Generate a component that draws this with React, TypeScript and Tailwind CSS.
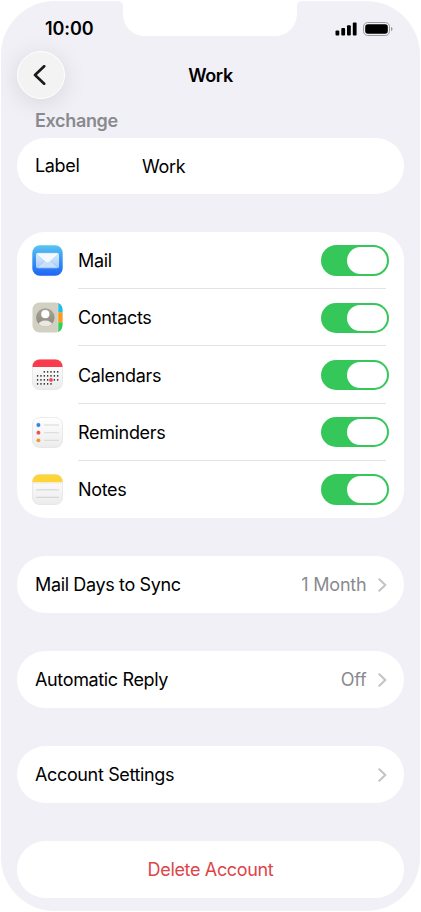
import { useState } from 'react'
import type { ReactNode } from 'react'

function MailIcon() {
  return (
    <svg viewBox="0 0 31 31" className="size-[31px]">
      <defs>
        <linearGradient id="mailBg" x1="0" y1="0" x2="0" y2="1">
          <stop offset="0" stopColor="#5ac4f3" />
          <stop offset="0.5" stopColor="#3592f4" />
          <stop offset="1" stopColor="#1f66f5" />
        </linearGradient>
        <linearGradient id="mailFold" x1="0" y1="0" x2="0" y2="1">
          <stop offset="0" stopColor="#d9edfd" />
          <stop offset="1" stopColor="#a5cbfa" />
        </linearGradient>
      </defs>
      <rect x="0.3" y="0.3" width="30.4" height="30.4" rx="7.5" fill="url(#mailBg)" />
      <rect x="4" y="8" width="23" height="15.2" rx="2" fill="url(#mailFold)" />
      <path d="M5 22.7l8-7.4h5l8 7.4z" fill="#c9e0fc" stroke="#8bb9f4" strokeWidth="0.5" />
      <path d="M4.3 8.8Q4.9 8 6 8h19q1.1 0 1.7.8l-9.5 8.4q-1.7 1.3-3.4 0z" fill="#f4faff" stroke="#a9cff5" strokeWidth="0.5" />
    </svg>
  )
}

function ContactsIcon() {
  return (
    <svg viewBox="0 0 31 31" className="size-[31px]">
      <defs>
        <clipPath id="contactsTile">
          <rect x="0.5" y="0.5" width="30" height="30" rx="7" />
        </clipPath>
        <clipPath id="contactsFace">
          <circle cx="13.3" cy="15.5" r="9.3" />
        </clipPath>
        <linearGradient id="contactsRing" x1="0" y1="0" x2="0" y2="1">
          <stop offset="0" stopColor="#a7a294" />
          <stop offset="1" stopColor="#8d897f" />
        </linearGradient>
      </defs>
      <g clipPath="url(#contactsTile)">
        <rect width="31" height="31" fill="#d1d0c2" />
        <rect x="26" width="5" height="10.5" fill="#20bfea" />
        <rect x="26" y="10.5" width="5" height="10" fill="#ff9917" />
        <rect x="26" y="20.5" width="5" height="10.5" fill="#2fd15a" />
        <path d="M26 0v31" stroke="#e2e1d6" strokeWidth="0.6" />
      </g>
      <circle cx="13.3" cy="15.5" r="9.3" fill="url(#contactsRing)" />
      <g clipPath="url(#contactsFace)">
        <circle cx="13.3" cy="12.2" r="4.1" fill="#fff" />
        <ellipse cx="13.3" cy="23.2" rx="7.2" ry="4.6" fill="#e9e8e2" />
      </g>
    </svg>
  )
}

// day dots as [row, first column, last column]
const calendarRows = [
  [0, 2, 6],
  [1, 0, 6],
  [2, 0, 6],
  [3, 0, 4],
]

function CalendarIcon() {
  return (
    <svg viewBox="0 0 31 31" className="size-[31px]">
      <defs>
        <clipPath id="calendarTile">
          <rect x="0.5" y="0.5" width="30" height="30" rx="7" />
        </clipPath>
        <linearGradient id="paper" x1="0" y1="0" x2="0" y2="1">
          <stop offset="0" stopColor="#ffffff" />
          <stop offset="1" stopColor="#ececed" />
        </linearGradient>
      </defs>
      <rect x="0.5" y="0.5" width="30" height="30" rx="7" fill="url(#paper)" stroke="#dededf" strokeWidth="0.6" />
      <rect width="31" height="8" fill="#fb3b4b" clipPath="url(#calendarTile)" />
      {calendarRows.map(([row, from, to]) =>
        Array.from({ length: to - from + 1 }, (_, i) => (
          <circle
            key={`${row}-${i}`}
            cx={5.6 + (from + i) * 3.35}
            cy={12.9 + row * 4}
            r="0.8"
            fill="#252525"
          />
        )),
      )}
      <circle cx="19" cy="20.9" r="1.9" fill="#fb4450" />
    </svg>
  )
}

function RemindersIcon() {
  return (
    <svg viewBox="0 0 31 31" className="size-[31px]">
      <rect x="0.5" y="0.5" width="30" height="30" rx="7" fill="url(#paper)" stroke="#dededf" strokeWidth="0.6" />
      <circle cx="6.4" cy="8" r="2.4" fill="#dbe7fa" />
      <circle cx="6.4" cy="15.7" r="2.4" fill="#f7dcdc" />
      <circle cx="6.4" cy="23.3" r="2.4" fill="#f8e5d2" />
      <circle cx="6.4" cy="8" r="1.9" fill="#3b7ee6" />
      <circle cx="6.4" cy="15.7" r="1.9" fill="#e2575a" />
      <circle cx="6.4" cy="23.3" r="1.9" fill="#ec9645" />
      <path d="M12 8h15M12 15.7h15M12 23.3h15" stroke="#cfcfd1" strokeWidth="0.8" />
    </svg>
  )
}

function NotesIcon() {
  return (
    <svg viewBox="0 0 31 31" className="size-[31px]">
      <rect x="0.5" y="0.5" width="30" height="30" rx="7" fill="url(#paper)" stroke="#dededf" strokeWidth="0.6" />
      <rect width="31" height="8.2" fill="#fed436" clipPath="url(#calendarTile)" />
      <path d="M1 9h29" stroke="#c9c4b0" strokeWidth="0.6" strokeDasharray="0.8 1" />
      <path d="M4.3 15.9h22.6M4.3 23.3h22.6" stroke="#d0d0d1" strokeWidth="1" />
    </svg>
  )
}

function Switch({ on, onToggle, label }: { on: boolean; onToggle: () => void; label: string }) {
  return (
    <button
      role="switch"
      aria-checked={on}
      aria-label={label}
      onClick={onToggle}
      className={`flex h-[30.5px] w-[68.5px] items-center rounded-full p-[2px] ${on ? 'justify-end bg-[#35c759]' : 'justify-start bg-gray-300'}`}
    >
      <span className="h-[26.5px] w-[40.5px] rounded-full bg-white" />
    </button>
  )
}

function Chevron() {
  return (
    <svg viewBox="0 0 9 14" className="h-[14px] w-[9px]" fill="none" stroke="#c3c3c6" strokeWidth="2" strokeLinecap="round" strokeLinejoin="round">
      <path d="M1.3 1.2L7.3 7l-6 5.8" />
    </svg>
  )
}

function LinkRow({ title, value }: { title: string; value?: ReactNode }) {
  return (
    <button className="flex h-[57px] shrink-0 items-center rounded-full bg-white pl-[18px] pr-[17.5px] pt-px text-left">
      <span className="grow tracking-[-0.36px]">{title}</span>
      {value && <span className="mr-[11px] tracking-[-0.2px] text-[#8a8a8e]">{value}</span>}
      <Chevron />
    </button>
  )
}

const services = [
  { name: 'Mail', icon: <MailIcon /> },
  { name: 'Contacts', icon: <ContactsIcon /> },
  { name: 'Calendars', icon: <CalendarIcon /> },
  { name: 'Reminders', icon: <RemindersIcon /> },
  { name: 'Notes', icon: <NotesIcon /> },
]

export default function App() {
  const [off, setOff] = useState<string[]>([])

  const toggle = (name: string) =>
    setOff((prev) => (prev.includes(name) ? prev.filter((n) => n !== name) : [...prev, name]))

  return (
    <div className="h-[912px] w-[421px] bg-white p-px font-['Inter',sans-serif] text-[18px] leading-[22px] tracking-[-0.34px] text-black">
      <div className="relative flex h-full flex-col overflow-hidden rounded-[54px] bg-[#f1f0f6]">

        {/* Notch */}
        <svg viewBox="0 0 184 36" className="absolute left-[117px] top-[-1px] h-[36px] w-[184px]">
          <path d="M0 0h184v1q-5 0-5 6v6c0 13-9 23-22 23H27C14 36 5 26 5 13V7q0-6-5-6z" fill="#fff" />
        </svg>

        {/* Status bar */}
        <div className="flex h-[49px] shrink-0 items-center pl-[44px] pr-[27px] pt-[6px]">
          <span className="grow font-semibold tracking-[-0.1px]">10:00</span>
          <svg viewBox="0 0 22 14" className="mr-[6px] h-[14px] w-[22px]">
            <rect x="0.5" y="8.6" width="3.8" height="5" rx="1" />
            <rect x="6.3" y="6.1" width="3.8" height="7.5" rx="1" />
            <rect x="12" y="3.3" width="3.8" height="10.3" rx="1" />
            <rect x="17.8" y="0.4" width="3.8" height="13.2" rx="1" />
          </svg>
          <svg viewBox="0 0 30 14" className="h-[14px] w-[30px]">
            <rect x="0.5" y="0.5" width="26" height="13" rx="4.2" fill="none" stroke="#9c9ca0" />
            <rect x="2.2" y="2.2" width="22.6" height="9.6" rx="2.8" />
            <path d="M28 4.8q1.6.7 1.6 2.2T28 9.2z" fill="#9c9ca0" />
          </svg>
        </div>

        {/* Navigation bar */}
        <header className="flex h-[50px] shrink-0 items-center pl-[16px] pr-[64px]">
          <button
            aria-label="Back"
            className="flex size-[48px] items-center justify-center rounded-full border border-white bg-[#f3f3f4] shadow-[0_4px_24px_rgba(0,0,0,0.11)]"
          >
            <svg viewBox="0 0 13 20" className="mr-[4px] h-[20px] w-[13px]" fill="none" stroke="#1a1a1a" strokeWidth="2.6" strokeLinecap="round" strokeLinejoin="round">
              <path d="M11.2 1.2L2 10l9.2 8.8" />
            </svg>
          </button>
          <h1 className="grow pt-px text-center font-semibold">Work</h1>
        </header>

        <main className="flex flex-col px-[16px]">
          <h2 className="mb-[6px] mt-[10px] pl-[18px] font-semibold text-[#8a8a8e]">Exchange</h2>

          <label className="flex h-[56px] shrink-0 items-center rounded-full bg-white px-[18px]">
            <span className="w-[107px]">Label</span>
            <span className="pt-px">Work</span>
          </label>

          <ul className="my-[38px] rounded-[28px] bg-white pl-[15px] pr-[15px]">
            {services.map(({ name, icon }, i) => (
              <li key={name} className="flex h-[57.2px] items-center">
                {icon}
                <div className="relative ml-[15px] flex h-full grow items-center">
                  <span className="grow pt-[1.2px]">{name}</span>
                  <Switch on={!off.includes(name)} onToggle={() => toggle(name)} label={name} />
                  {i < services.length - 1 && (
                    <span className="absolute bottom-0 left-0 right-[3px] h-px bg-[#e3e3e5]" />
                  )}
                </div>
              </li>
            ))}
          </ul>

          <div className="flex flex-col gap-[38px]">
            <LinkRow title="Mail Days to Sync" value="1 Month" />
            <LinkRow title="Automatic Reply" value="Off" />
            <LinkRow title="Account Settings" />
            <button className="h-[57px] shrink-0 rounded-full bg-white pt-[2px] text-[#dc4549]">Delete Account</button>
          </div>
        </main>
      </div>
    </div>
  )
}
